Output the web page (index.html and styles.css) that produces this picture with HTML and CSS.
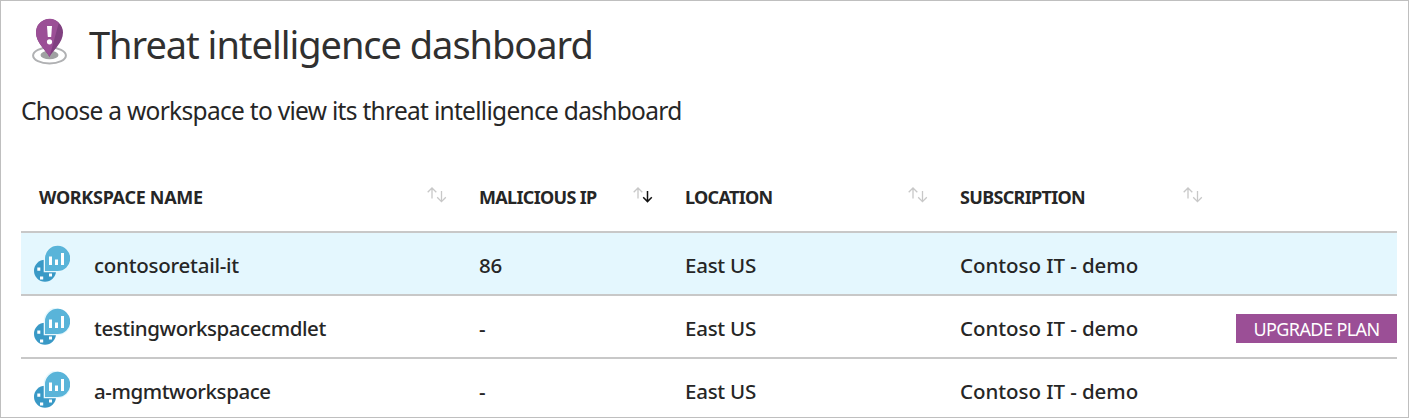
FILE: index.html
```html
<!DOCTYPE html>
<html lang="en">
<head>
<meta charset="utf-8">
<title>Threat intelligence dashboard</title>
<link rel="stylesheet" href="styles.css">
</head>
<body>
<svg class="defs" width="0" height="0" aria-hidden="true">
  <symbol id="workspace" viewBox="0 0 36 37">
    <circle cx="11" cy="25.800" r="11" fill="#3999c6"/>
    <path class="halo" d="M9.700 27.300V13A13.500 13.500 0 0 1 23.500-.7L37 13A13.500 13.500 0 0 1 23.500 27.300Z"/>
    <path d="M11 26V13A12.600 12.600 0 1 1 23.500 26Z" fill="#59b4d9"/>
    <path d="M15 11.500h3V20h-3zM21 14.500h3V20h-3zM27 8h3v12h-3zM3.300 22.500h3v3.200h-3zM6 31.500h3.200v3H6zM15 28.500h3v3h-3z" fill="#fff"/>
  </symbol>
  <symbol id="sort" viewBox="0 0 20 16">
    <path class="up" d="M5 11.500V1.200M.7 5.300L5 1L9.300 5.300"/>
    <path class="down" d="M14.500 4V14.500M10.200 10.300L14.500 14.600L18.800 10.300"/>
  </symbol>
</svg>
<main class="page">
  <header class="heading">
    <svg class="pin" viewBox="0 0 36 47">
      <ellipse cx="17.500" cy="37.500" rx="16.400" ry="8" fill="#fff" stroke="#b0b1b3" stroke-width="2"/>
      <ellipse cx="17.500" cy="37" rx="9" ry="4.300" fill="#a0a1a2"/>
      <path d="M17.500 39C14 32 4 25 4 14.500A13.500 13.500 0 0 1 31 14.500C31 25 21 32 17.500 39Z" fill="#804080"/>
      <path d="M17.500 39C14 32 4 25 4 14.500A13.500 13.500 0 0 1 26.800 4.700Z" fill="#9b4f96"/>
      <path d="M15 8h5l-.8 11h-3.400z" fill="#fff"/>
      <circle cx="17.500" cy="23.800" r="2.600" fill="#fff"/>
    </svg>
    <h1 class="title">Threat intelligence dashboard</h1>
  </header>
  <p class="intro">Choose a workspace to view its threat intelligence dashboard</p>
  <section class="table">
    <div class="row head">
      <div class="cell name"><span>WORKSPACE NAME</span><svg class="sort"><use href="#sort"/></svg></div>
      <div class="cell"><span>MALICIOUS IP</span><svg class="sort" viewBox="0 0 20 16"><path d="M5 11.500V1.200M.7 5.300L5 1L9.300 5.300"/><path class="active" d="M14.500 4V14.500M10.200 10.300L14.500 14.600L18.800 10.300"/></svg></div>
      <div class="cell"><span>LOCATION</span><svg class="sort"><use href="#sort"/></svg></div>
      <div class="cell"><span>SUBSCRIPTION</span><svg class="sort"><use href="#sort"/></svg></div>
    </div>
    <div class="row selected">
      <div class="cell item"><svg class="ws"><use href="#workspace"/></svg><span>contosoretail-it</span></div>
      <div class="cell">86</div><div class="cell">East US</div><div class="cell last">Contoso IT - demo</div>
    </div>
    <div class="row">
      <div class="cell item"><svg class="ws"><use href="#workspace"/></svg><span class="long">testingworkspacecmdlet</span></div>
      <div class="cell">-</div><div class="cell">East US</div><div class="cell last">Contoso IT - demo</div>
      <button class="upgrade">UPGRADE PLAN</button>
    </div>
    <div class="row">
      <div class="cell item"><svg class="ws"><use href="#workspace"/></svg><span class="long">a-mgmtworkspace</span></div>
      <div class="cell">-</div><div class="cell">East US</div><div class="cell last">Contoso IT - demo</div>
    </div>
  </section>
</main>
</body>
</html>
```
FILE: styles.css
```css
* { box-sizing: border-box; }
body { margin: 0; background: #fff; color: #262626; font-family: "Noto Sans", "Open Sans", sans-serif; }
.defs { position: absolute; }
.page { height: 418px; border: 1px solid #bfbfbf; padding: 0 11px 0 20px; overflow: hidden; }
.heading { display: flex; height: 84px; padding-left: 11px; }
.pin { width: 36px; height: 47px; margin-top: 17px; flex: none; }
.title { margin: 16px 0 0 21px; font-size: 38px; line-height: 54px; font-weight: 400; letter-spacing: -1.04px; color: #303030; white-space: nowrap; }
.intro { margin: 8px 0 0; height: 70px; font-size: 24.500px; line-height: 36px; letter-spacing: -.7px; white-space: nowrap; }
.row { display: grid; grid-template-columns: 458px 206px 275px 275px 1fr; align-items: center; height: 63px; padding-top: 2px; border-bottom: 2px solid #c8c8c8; font-size: 20.500px; font-weight: 500; letter-spacing: -.25px; white-space: nowrap; }
.head { height: 70px; padding-top: 0; font-size: 18px; font-weight: 700; letter-spacing: -.68px; }
.head .cell { display: flex; justify-content: space-between; padding-right: 32px; }
.head .name { padding-left: 18px; letter-spacing: -.3px; }
.selected { background: #e4f7fe; }
.last { letter-spacing: -.05px; }
.long { letter-spacing: -.43px; }
.item { display: flex; align-items: center; gap: 24px; padding-left: 13px; }
.ws { width: 36px; height: 37px; margin-top: -2px; flex: none; }
.halo { fill: #e9f8fd; }
.sort { width: 20px; height: 16px; margin-top: 2px; fill: none; stroke: #c8c8c8; stroke-width: 1.300px; }
.active { stroke: #111; stroke-width: 1.500px; }
.upgrade { justify-self: end; width: 161px; height: 29px; margin-top: 2px; padding: 0; border: 0; background: #9b4f96; color: #fff; font: 400 18px "Noto Sans", sans-serif; letter-spacing: -.6px; }
```
